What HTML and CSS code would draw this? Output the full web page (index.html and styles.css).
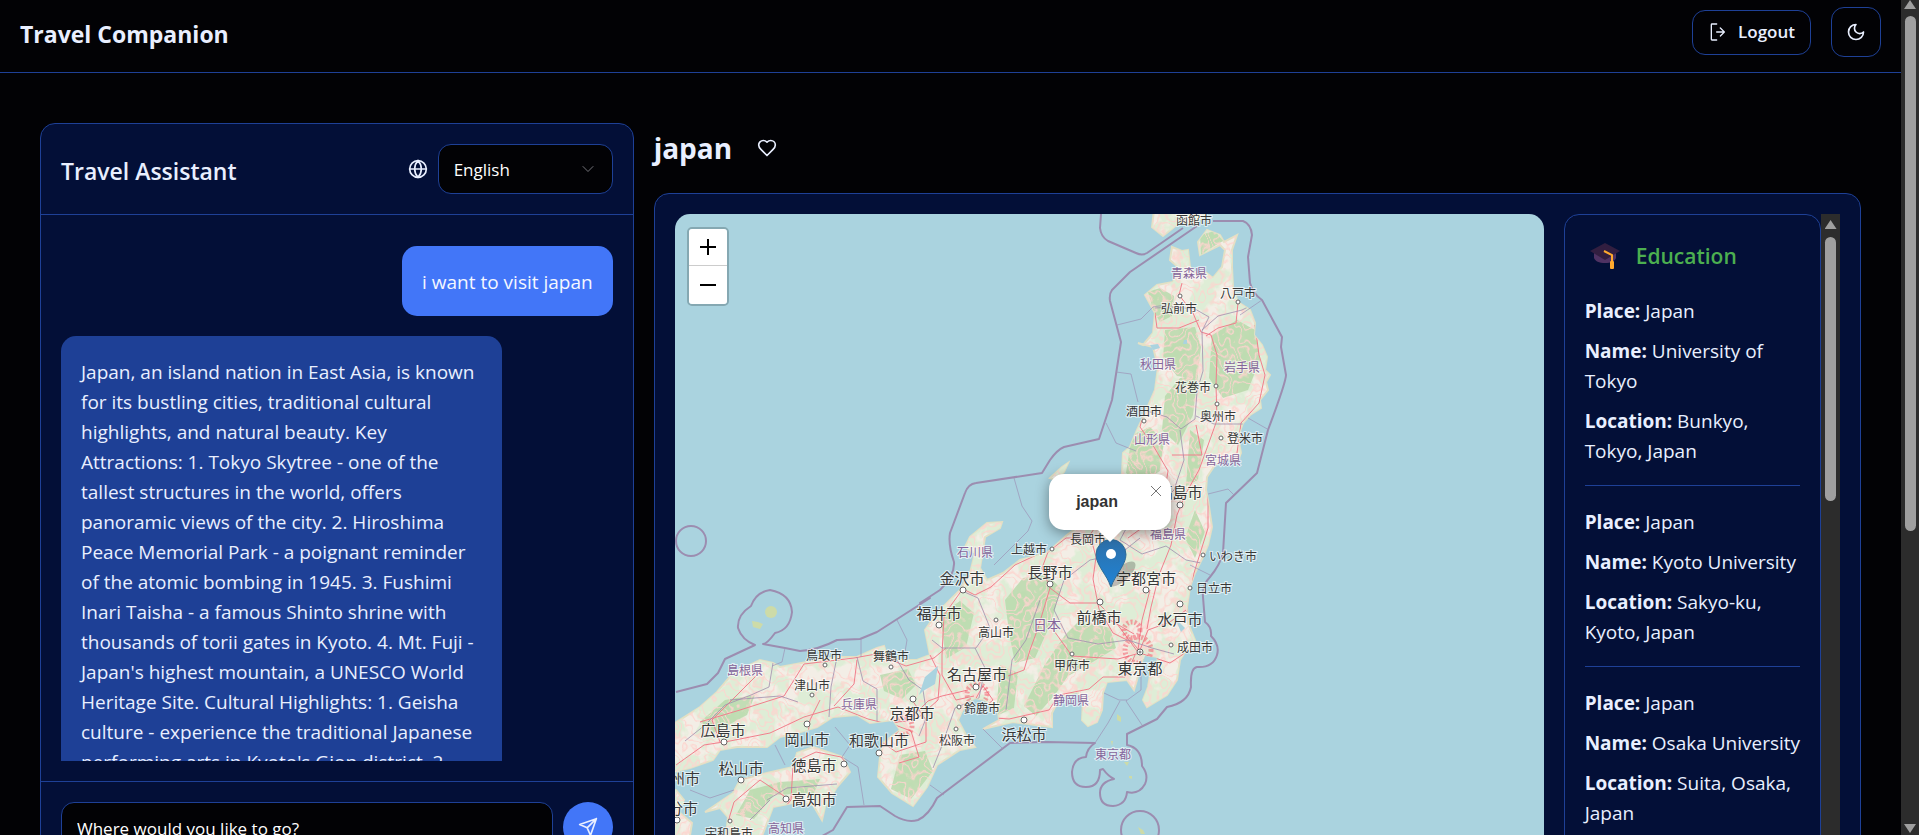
FILE: index.html
```html
<!DOCTYPE html>
<html lang="en">
<head>
<meta charset="utf-8">
<title>Travel Companion</title>
<link rel="stylesheet" href="styles.css">
</head>
<body>
<div class="window">
<div class="page">
  <header class="topbar">
    <h1 class="brand">Travel Companion</h1>
    <div class="topbar-actions">
      <button class="btn logout" type="button">
        <svg class="icon" viewBox="0 0 15 15"><path fill="currentColor" fill-rule="evenodd" d="M3 1a1 1 0 0 0-1 1v11a1 1 0 0 0 1 1h3.500a.5.5 0 0 0 0-1H3V2h3.500a.5.5 0 0 0 0-1zM12.600 7.850a.5.5 0 0 0 0-.7l-3-3a.5.5 0 1 0-.7.7L11.040 7H6.500a.5.5 0 0 0 0 1h4.540L8.900 10.150a.5.5 0 0 0 .7.7z"/></svg>
        Logout
      </button>
      <button class="btn theme" type="button" aria-label="Toggle theme">
        <svg class="icon line" viewBox="0 0 24 24"><path d="M12 3a6 6 0 0 0 9 9 9 9 0 1 1-9-9Z"/></svg>
      </button>
    </div>
  </header>

  <main class="layout">
    <section class="panel chat">
      <div class="chat-head">
        <h2 class="chat-title">Travel Assistant</h2>
        <div class="lang">
          <svg class="icon globe line" viewBox="0 0 24 24"><circle cx="12" cy="12" r="10"/><path d="M12 2a14.500 14.500 0 0 0 0 20 14.500 14.500 0 0 0 0-20M2 12h20"/></svg>
          <div class="select-wrap">
            <select class="select" aria-label="Language"><option>English</option></select>
            <svg class="chevron line" viewBox="0 0 24 24"><path d="m6 9 6 6 6-6"/></svg>
          </div>
        </div>
      </div>
      <div class="messages">
        <p class="bubble user">i want to visit japan</p>
        <p class="bubble bot">Japan, an island nation in East Asia, is known<br>for its bustling cities, traditional cultural<br>highlights, and natural beauty. Key<br>Attractions: 1. Tokyo Skytree - one of the<br>tallest structures in the world, offers<br>panoramic views of the city. 2. Hiroshima<br>Peace Memorial Park - a poignant reminder<br>of the atomic bombing in 1945. 3. Fushimi<br>Inari Taisha - a famous Shinto shrine with<br>thousands of torii gates in Kyoto. 4. Mt. Fuji -<br>Japan's highest mountain, a UNESCO World<br>Heritage Site. Cultural Highlights: 1. Geisha<br>culture - experience the traditional Japanese<br>performing arts in Kyoto's Gion district. 2.</p>
      </div>
      <form class="composer">
        <input class="input" type="text" aria-label="Message" placeholder="Where would you like to go?">
        <button class="send" type="button" aria-label="Send">
          <svg class="icon line" viewBox="0 0 24 24"><path d="m22 2-7 20-4-9-9-4ZM22 2 11 13"/></svg>
        </button>
      </form>
    </section>

    <section class="place">
      <div class="place-head">
        <h2 class="place-title">japan</h2>
        <button class="like" type="button" aria-label="Save place">
          <svg class="icon line" viewBox="0 0 24 24"><path d="M19 14c1.490-1.460 3-3.210 3-5.500A5.500 5.500 0 0 0 16.500 3c-1.760 0-3 .5-4.500 2-1.500-1.500-2.740-2-4.500-2A5.500 5.500 0 0 0 2 8.500c0 2.300 1.500 4.050 3 5.500l7 7Z"/></svg>
        </button>
      </div>
      <div class="panel explore">
        <div class="map">
          <svg class="tiles" viewBox="675 214 869 748" preserveAspectRatio="xMidYMin slice">
            <defs>
              <path id="land" d="M1172 247L1182 251 1188 250 1190 267 1197 275 1205 272 1213 278 1222 267 1225 250 1220 245 1200 255 1198 242 1207 230 1220 235 1224 242 1237 235 1232 250 1232 267 1233 287 1238 302 1250 310 1255 323 1254 335 1262 345 1267 357 1265 370 1270 375 1266 382 1268 390 1260 400 1261 408 1250 415 1243 423 1238 437 1241 453 1238 460 1225 459 1215 465 1207 477 1206 490 1208 500 1212 527 1208 545 1203 557 1195 573 1190 587 1187 607 1188 623 1195 640 1197 647 1185 652 1180 660 1177 680 1167 695 1147 707 1143 700 1148 687 1150 675 1158 665 1156 657 1145 656 1140 667 1137 680 1134 690 1127 680 1107 682 1103 693 1102 710 1097 722 1088 726 1082 720 1083 700 1077 692 1060 697 1052 713 1052 727 1013 722 983 729 999 720 998 712 985 700 975 698 965 705 958 720 966 735 975 747 960 750 937 765 927 787 913 806 892 793 878 777 880 757 883 743 900 730 893 720 870 723 857 715 833 717 817 727 797 733 780 737 767 747 737 747 720 750 713 760 690 768 660 775 660 728 675 723 700 707 717 692 733 673 760 660 773 663 780 667 807 662 837 657 857 657 877 648 884 646 887 655 897 660 917 660 930 655 925 630 937 613 960 590 970 573 975 553 965 547 970 537 987 523 1002 522 1000 528 985 537 983 550 980 568 987 580 1003 573 1020 560 1047 553 1067 535 1087 520 1113 500 1122 473 1123 453 1130 447 1137 430 1145 413 1155 390 1158 367 1153 347 1138 343 1143 345 1153 333 1155 313 1145 295 1157 285 1173 282 1178 267 1170 260ZM1154 210L1152 227 1163 236 1173 228 1180 222 1195 224 1210 210ZM797 753L813 747 843 757 850 772 837 787 825 807 822 820 813 805 793 803 773 807 767 823 753 860 723 860 728 817 720 808 705 812 733 793 740 780 767 773 793 767ZM660 785L676 790 684 800 679 812 692 823 686 860 660 860ZM1068 463L1064 472 1056 480 1050 478 1062 467Z"/>
              <clipPath id="shore"><use href="#land"/></clipPath>
              <filter id="forest" x="0" y="0" width="100%" height="100%">
                <feTurbulence type="fractalNoise" baseFrequency=".05 .042" numOctaves="4" seed="8"/>
                <feColorMatrix values="0 0 0 0 .73  0 0 0 0 .85  0 0 0 0 .67  8 0 0 0 -3.300"/>
              </filter>
              <filter id="lanes" x="0" y="0" width="100%" height="100%">
                <feTurbulence type="fractalNoise" baseFrequency=".04 .035" numOctaves="3" seed="31"/>
                <feColorMatrix values="0 0 0 0 .98  0 0 0 0 .66  0 0 0 0 .62  0 1 0 0 0"/>
                <feComponentTransfer><feFuncA type="table" tableValues="0 0 0 0 0 0 0 0 0 0 .9 0 0 0 .9 0 0 0 .9 0 0 0 0 0 0 0 0 0 0"/></feComponentTransfer>
              </filter>
              <linearGradient id="pin" x1="0" y1="0" x2="0" y2="1"><stop offset="0" stop-color="#2e6fa8"/><stop offset="1" stop-color="#1f84d6"/></linearGradient>
            </defs>
            <rect x="0" y="0" width="2600" height="2000" fill="#aad3df"/>
            <use href="#land" fill="#f3eee6" stroke="#e3e0c4" stroke-width="2"/>
            <g clip-path="url(#shore)">
              <rect x="660" y="210" width="640" height="650" filter="url(#forest)"/>
              <g fill="#b9d9ab" opacity=".85">
                <path d="M1200 235l15-4 8 10-17 10-5 5zM1148 292l12-4 14 8-2 20-12 6-7-12zM1165 330l30-3 6 20-4 32-20-3-14-18zM1212 335l25-15 18 10 5 30-12 30-25 8-14-20zM1132 435l18-8 14 14-4 30-20 12-14-10zM1005 600l18-22 24-4 14 15-10 34-16 35-20 5-6-30zM1065 635l15-15 30 8 6 20-30 18-18 10-14 20-18 20-12-10 20-40zM1000 665l18 8-4 35-18 8zM900 755l25-4 8 20-22 28-20-10zM880 675l28-6 8 16-14 14-18-8zM940 615l20-14 14 12-8 34-20 12zM700 722l25-22 30-5-8 20-34 18zM750 790l30-8 40-3-6 14-40 2-20 24-18-4z"/>
                <path d="M1180 378l18-3-5 40-15 30-16-15 3-34zM1190 430l14 10-6 40-12 6zM1195 510l10 22-10 26-10-20zM1122 510l20-16 14 20-20 14z"/>
              </g>
              <rect x="660" y="210" width="640" height="650" filter="url(#lanes)"/>
              <g class="red-roads">
                <path d="M1182 283l-3 12 14 18 8 19 10 3 6 20-1 30 1 35-10 28-8 22-14 25-8 20-6 30-12 30-8 32-4 22M1238 303l-2 20-18 5-12 8M1255 325l4 30 6 20-6 28-18 20-4 30M1155 313l2 15 22 0 20-8M1144 412l-4 15 14 20 14 24-4 26-14 25-22 16M1172 455l30 0-6-30M1208 478l0 50-14 45-7 40"/>
                <path d="M1113 500l-25 38-22 0-18 14-6 16 8 20-12 40-8 22-6 20-16 6M1090 535l6 22-3 22 6 30 14 24 20 10 8 10M965 590l10 5 16-8 24-22 30-14M962 590l-18 25-2 40 0 20 14 25 18-4M1050 588l20 15 28 0 14 14 28 38M1140 653l30 10 15-10M1140 653l-22 6-46-3-20-28M1135 655l-10 22-22 0-14 12-30 6-10 15-40 9-28-2M1140 650l8-20 22-8 16-12M1150 590l-8 30-4 30M1110 620l24 14"/>
                <path d="M676 765l28-20 26-4 40-8 34-16 34-10 30 12 16 4 24-2 20-20 14-5 26-6M700 722l40-12 44-14 20-32 50-6 22-4 30 12 28-8 12-10M720 742l-8-22 20-20 30-30M820 700l-10 20-3 20M857 660l-3 24-20 22M912 700l14 20 0 22-30 10-14-10M895 725l16 6 8 26-20 6M740 780l50-16 26-12 25 5 10 12M790 800l-30-20-26 22-6 20M845 760l22-30M793 765l-2 35-24 28M975 700l8-14 10 14-14 12M930 655l10 20-2 25-20 18"/>
              </g>
              <g class="cities"><circle cx="1138" cy="650" r="13"/><circle cx="903" cy="726" r="9"/><circle cx="977" cy="694" r="10"/><circle cx="1132" cy="630" r="8"/></g>
              <path class="pref" d="M1155 308l20-1 20 2 14 8-7 14 1 40-6 20-2 28-14 10-14-12-20-6M1202 330l16-14 24-6 16-8M1196 416l18 8 28 0 20 6M1180 430l4 30-10 30-20 20-20 4-14 26 22 14 24-8 20 14 20 4M1090 560l30-6 20-16M1090 560l-26 20-10 30 14 28 30 6 30-4 24 8 22 6M1040 600l-14 40-14 20-6 50M960 590l18 8 12 30-14 20-34 0-10-8M975 648l10 20-6 30-24 10-14 40-8 20M897 660l12 20 14 10 4 26-8 20M857 657l6 24 14 8 0 32M837 657l-6 30-2 30M773 663l-4 24-18 8-26 10-20 20-20 16M730 700l50-4 18 6M767 800l20-12 50-4M750 820l20-20"/>
            </g>
            <g fill="#aad3df"><path d="M938 666l-3 18-12 7-4 4 6-18zM1145 656l12 2-2 7-10 6-3-6zM1184 340l3 0 0 4-4 0zM1150 345l8-1 2 4-7 2zM1175 618l10 10-4 4z"/></g>
            <g fill="#cddba8"><circle cx="771" cy="612" r="6"/><path d="M752 621l6 1 5 2-3 5-7-2zM1117 714l4 3 0 5-4-2zM1124 762l5 0-2 4zM1129 776l3 0 0 3-3-1zM1138 827l5 3 2 4-4 0zM1111 741l2 0-1 5z"/></g>
            <g class="sea-lines">
              <path d="M1101 214L1100 228Q1101 237 1108 241L1136 253Q1142 256 1147 253L1183 228M1197 226L1130 272 1112 290Q1109 294 1110 301L1121 342 1112 400 1099 439 1064 447Q1057 450 1050 460L1042 473 976 483Q968 484 965 493L950 533Q948 545 954 562 955 575 940 590L920 603 930 598 877 632 860 639 837 640Q818 650 800 651L785 648 763 644Q767 644 775 633 790 630 792 612 791 594 770 590 756 592 751 606 737 615 738 628 742 640 755 645L725 659 718 673 707 684 676 692"/>
              <path d="M1213 221L1243 221Q1251 224 1252 235L1248 257 1250 283Q1253 294 1262 300L1282 337 1281 347 1286 375Q1286 382 1268 430L1257 473 1226 503 1223 553Q1220 565 1210 577 1202 585 1203 597L1205 622Q1212 627 1211 636 1220 645 1217 655 1213 668 1197 667 1190 668 1191 687 1188 703 1167 707L1157 719 1127 734 1127 745Q1142 748 1142 766 1149 775 1145 784 1139 795 1127 792 1126 805 1113 806 1100 806 1100 793 1100 782 1114 779 1108 776 1103 769L1100 770Q1100 787 1086 787 1072 787 1072 772 1073 758 1086 757 1087 748 1095 743L1047 742 1010 743 937 798Q929 815 918 820 907 823 895 816L880 806 847 807 833 830 815 840"/>
              <circle cx="1140" cy="830" r="19"/><circle cx="691" cy="541" r="15"/>
            </g>
            <path class="sea-thin" d="M1117 325l24-6 12-12 12-2M1116 372l15 2 7 28M1106 423l10 20 20 8M1248 418l21 12M1262 300l-22 15M1014 478l8 28 10 15-4 10-34 34M1208 494l20-5 6 6M1190 565l20 10M897 620l10 20-3 18M861 639l0 18M785 648l-3 14-10 4M1127 700l-8 0-15-7M1141 670l0 20-15 11 16 24M1120 701l-12 22-13 20M983 729l20 20M835 727l15 18-8 12 16 10 6 38M775 745l10 20M690 790l20 8 24-8M930 785l14 10"/>
            <g class="dots">
              <g><circle cx="1180" cy="296" r="2"/><circle cx="1238" cy="302" r="2"/><circle cx="1216" cy="386" r="2"/><circle cx="1217" cy="404" r="2"/><circle cx="1144" cy="421" r="2"/><circle cx="1221" cy="438" r="2"/><circle cx="1052" cy="549" r="2"/><circle cx="1203" cy="555" r="2"/><circle cx="1190" cy="588" r="2"/><circle cx="996" cy="620" r="2"/><circle cx="1171" cy="645" r="2"/><circle cx="1072" cy="654" r="2"/><circle cx="959" cy="707" r="2"/><circle cx="956" cy="729" r="2"/><circle cx="891" cy="667" r="2"/><circle cx="825" cy="665" r="2"/><circle cx="812" cy="695" r="2"/><circle cx="730" cy="821" r="2"/></g>
              <g><circle cx="1180" cy="505" r="3"/><circle cx="963" cy="590" r="3"/><circle cx="1050" cy="584" r="3"/><circle cx="1146" cy="590" r="3"/><circle cx="939" cy="625" r="3"/><circle cx="1100" cy="602" r="3"/><circle cx="1180" cy="604" r="3"/><circle cx="1140" cy="652" r="3"/><circle cx="1140" cy="652" r="1"/><circle cx="1024" cy="720" r="3"/><circle cx="976" cy="687" r="3"/><circle cx="913" cy="699" r="3"/><circle cx="879" cy="753" r="3"/><circle cx="724" cy="742" r="3"/><circle cx="807" cy="724" r="3"/><circle cx="741" cy="780" r="3"/><circle cx="844" cy="764" r="3"/><circle cx="786" cy="799" r="3"/><circle cx="677" cy="820" r="3"/></g>
            </g>
            <g class="names small">
              <text x="1194" y="225">函館市</text><text x="1238" y="298">八戸市</text><text x="1179" y="313">弘前市</text><text x="1193" y="392">花巻市</text><text x="1144" y="416">酒田市</text><text x="1218" y="421">奥州市</text><text x="1245" y="443">登米市</text><text x="1088" y="544">長岡市</text><text x="1029" y="554">上越市</text><text x="1233" y="561">いわき市</text><text x="1214" y="593">日立市</text><text x="996" y="637">高山市</text><text x="1195" y="652">成田市</text><text x="1072" y="670">甲府市</text><text x="982" y="713">鈴鹿市</text><text x="957" y="745">松阪市</text><text x="891" y="661">舞鶴市</text><text x="824" y="660">鳥取市</text><text x="812" y="690">津山市</text><text x="729" y="838">宇和島市</text>
            </g>
            <g class="names large">
              <text x="1180" y="498">福島市</text><text x="962" y="584">金沢市</text><text x="1050" y="578">長野市</text><text x="1146" y="584">宇都宮市</text><text x="939" y="619">福井市</text><text x="1099" y="623">前橋市</text><text x="1180" y="625">水戸市</text><text x="1140" y="674">東京都</text><text x="1024" y="740">浜松市</text><text x="977" y="680">名古屋市</text><text x="912" y="719">京都市</text><text x="879" y="746">和歌山市</text><text x="723" y="736">広島市</text><text x="807" y="745">岡山市</text><text x="741" y="774">松山市</text><text x="814" y="771">徳島市</text><text x="814" y="805">高知市</text><text x="685" y="784">州市</text><text x="683" y="814">分市</text>
            </g>
            <g class="names region">
              <text x="1189" y="278">青森県</text><text x="1158" y="369">秋田県</text><text x="1242" y="372">岩手県</text><text x="1152" y="444">山形県</text><text x="1223" y="465">宮城県</text><text x="1168" y="539">福島県</text><text x="975" y="557">石川県</text><text x="1071" y="705">静岡県</text><text x="1113" y="759">東京都</text><text x="859" y="709">兵庫県</text><text x="745" y="675">島根県</text><text x="786" y="833">高知県</text><text class="nation" x="1047" y="630">日本</text>
            </g>
            <ellipse cx="1122" cy="574" rx="17" ry="7" fill="#000" opacity=".22" transform="rotate(-42 1122 574)"/>
            <path d="M1111 587C1107 575 1096 565 1096 554.500A15 15 0 0 1 1126 554.500C1126 565 1115 575 1111 587Z" fill="url(#pin)" stroke="#2e6c97"/><circle cx="1111" cy="554" r="5" fill="#fff"/>
          </svg>
          <div class="zoom">
            <button type="button" aria-label="Zoom in"><svg viewBox="0 0 16 16"><path d="M0 8h16M8 0v16"/></svg></button>
            <button type="button" aria-label="Zoom out"><svg viewBox="0 0 16 16"><path d="M0 8h16"/></svg></button>
          </div>
          <div class="popup">
            <strong>japan</strong>
            <button class="popup-close" type="button" aria-label="Close popup"><svg viewBox="0 0 10 10"><path d="M0 0l10 10M10 0L0 10"/></svg></button>
          </div>
        </div>

        <div class="side">
          <article class="card">
            <h3 class="card-title">
              <svg class="cap" viewBox="0 0 30 26"><path fill="#4f3263" d="M4 9v6c1 3 5 5 11 5s10-2 11-5V9z"/><path fill="#321e40" d="M15 0l15 8-15 9L0 8z"/><path d="M14 8l8 4v8" fill="none" stroke="#ffa92e" stroke-width="2"/><rect x="20" y="18" width="4" height="8" rx="1" fill="#ffa92e"/></svg>
              Education
            </h3>
            <div class="entry"><p><b>Place:</b> Japan</p><p><b>Name:</b> University of<br>Tokyo</p><p><b>Location:</b> Bunkyo,<br>Tokyo, Japan</p></div>
            <div class="entry"><p><b>Place:</b> Japan</p><p><b>Name:</b> Kyoto University</p><p><b>Location:</b> Sakyo-ku,<br>Kyoto, Japan</p></div>
            <div class="entry"><p><b>Place:</b> Japan</p><p><b>Name:</b> Osaka University</p><p><b>Location:</b> Suita, Osaka,<br>Japan</p></div>
          </article>
          <div class="scroll inner-scroll"><i class="arrow up"></i><i class="thumb"></i></div>
        </div>
      </div>
    </section>
  </main>
</div>
<div class="scroll page-scroll"><i class="arrow up"></i><i class="thumb"></i><i class="arrow down"></i></div>
</div>
</body>
</html>
```
FILE: styles.css
```css
* { box-sizing: border-box; margin: 0; }

:root {
  --bg: #020205;
  --panel: #030f37;
  --line: #1e4096;
  --text: #e9efff;
  --accent: #4276f8;
}

body {
  background: var(--bg);
  color: var(--text);
  font: 19px/30px "Open Sans", "Noto Sans", sans-serif;
}

button, input, select { font: inherit; color: inherit; }
button { cursor: pointer; padding: 0; background: none; border: 0; }
svg { display: block; }

.window { display: flex; height: 100vh; overflow: hidden; }
.page { flex: 1; min-width: 0; overflow: hidden; }
.icon { width: 20px; height: 20px; flex: none; }
.line { fill: none; stroke: currentColor; stroke-width: 2; stroke-linecap: round; stroke-linejoin: round; }

.topbar {
  display: flex;
  align-items: center;
  justify-content: space-between;
  padding: 7px 20px 15px;
  border-bottom: 1px solid var(--line);
}
.brand { padding-top: 4px; font-size: 23px; font-weight: 700; }
.topbar-actions { display: flex; align-items: center; gap: 20px; }
.btn {
  display: flex;
  align-items: center;
  justify-content: center;
  border: 1px solid var(--line);
  border-radius: 13px;
}
.logout { height: 45px; padding: 0 15px; gap: 10px; font-size: 17px; font-weight: 600; }
.theme { width: 50px; height: 50px; }

.layout {
  display: grid;
  grid-template-columns: repeat(3, minmax(0, 1fr));
  gap: 20px;
  padding: 50px 40px;
}
.panel { background: var(--panel); border: 1px solid var(--line); border-radius: 15px; }

.chat { display: flex; flex-direction: column; }
.chat-head {
  display: flex;
  align-items: center;
  justify-content: space-between;
  padding: 20px;
  border-bottom: 1px solid var(--line);
}
.chat-title { padding-top: 4px; font-size: 23px; font-weight: 600; }
.lang { display: flex; align-items: center; gap: 10px; }
.select-wrap { position: relative; width: 175px; }
.select {
  width: 100%;
  height: 50px;
  padding: 2px 15px 0;
  font-size: 17px;
  color: #fff;
  background: var(--bg);
  border: 1px solid var(--line);
  border-radius: 13px;
  appearance: none;
}
.chevron { position: absolute; right: 15px; top: 15px; width: 20px; height: 20px; color: #8a8a92; stroke-width: 1; pointer-events: none; }

.messages {
  display: flex;
  flex-direction: column;
  gap: 20px;
  height: 546px;
  margin-bottom: 20px;
  padding: 31px 20px 0;
  overflow: hidden;
}
.bubble { flex: none; padding: 21px 20px 19px; border-radius: 15px; }
.user { align-self: flex-end; background: var(--accent); color: #f4f7ff; }
.bot { align-self: flex-start; width: 80%; background: #1e4096; white-space: nowrap; }

.composer { display: flex; gap: 10px; padding: 20px; border-top: 1px solid var(--line); }
.input {
  flex: 1;
  min-width: 0;
  height: 50px;
  padding: 2px 15px 0;
  font-size: 17px;
  background: var(--bg);
  border: 1px solid var(--line);
  border-radius: 13px;
}
.input::placeholder { color: #fff; opacity: 1; }
.send {
  display: grid;
  place-items: center;
  width: 50px;
  height: 50px;
  border-radius: 50%;
  background: var(--accent);
}

.place { grid-column: span 2; }
.place-head { display: flex; align-items: center; gap: 25px; height: 50px; margin-bottom: 20px; }
.place-title { font-size: 28px; font-weight: 700; }
.explore {
  display: grid;
  grid-template-columns: repeat(4, minmax(0, 1fr));
  gap: 20px;
  height: 790px;
  padding: 20px;
}

.map { grid-column: span 3; position: relative; overflow: hidden; border-radius: 15px; }
.tiles { width: 100%; height: 100%; }
.red-roads { fill: none; stroke: #f07f8c; stroke-width: 1; }
.cities { fill: none; stroke: #f2606d; stroke-width: 5; stroke-dasharray: 2 2; opacity: .55; }
.pref { fill: none; stroke: #a08fae; opacity: .8; }
.sea-lines { fill: none; stroke: #9c8db0; stroke-width: 2; stroke-linejoin: round; }
.sea-thin { fill: none; stroke: #9c93b6; opacity: .7; }
.dots { fill: #fff; stroke: #666; }
.names { font-family: "Noto Sans CJK JP", sans-serif; text-anchor: middle; paint-order: stroke; stroke: rgba(255, 255, 255, .65); stroke-width: 2px; fill: #383838; }
.small { font-size: 12px; }
.large { font-size: 15px; }
.region { font-size: 12px; fill: #85659a; }
.nation { font-size: 14px; }

.zoom {
  position: absolute;
  left: 12px;
  top: 13px;
  overflow: hidden;
  border: 2px solid #85a8b2;
  border-radius: 5px;
}
.zoom button { display: grid; place-items: center; width: 38px; height: 38px; background: #fff; }
.zoom button:first-child { height: 37px; border-bottom: 1px solid #ccc; }
.zoom svg { width: 16px; height: 16px; fill: none; stroke: #000; stroke-width: 2; }

.popup {
  position: absolute;
  left: 50%;
  top: 260px;
  width: 122px;
  height: 56px;
  margin-left: -60px;
  padding: 13px 27px;
  background: #fff;
  color: #333;
  border-radius: 15px;
  box-shadow: 0 3px 14px rgba(0, 0, 0, .4);
  font: 700 16px/30px "Liberation Sans", Arial, sans-serif;
}
.popup::after {
  content: "";
  position: absolute;
  left: 49px;
  top: 56px;
  border: 12px solid transparent;
  border-top-color: #fff;
}
.popup-close { position: absolute; right: 10px; top: 12px; }
.popup-close svg { width: 10px; height: 10px; overflow: visible; fill: none; stroke: #757575; }

.side { display: flex; min-height: 0; overflow: hidden; }
.card { flex: 1; padding: 20px; border: 1px solid var(--line); border-radius: 15px; white-space: nowrap; }
.card-title {
  display: flex;
  align-items: center;
  gap: 16px;
  height: 41px;
  margin-bottom: 20px;
  padding-left: 5px;
  color: #4caf50;
  font-size: 21px;
  font-weight: 600;
}
.cap { width: 30px; height: 26px; }
.entry { display: grid; gap: 10px; padding-bottom: 19px; }
.entry + .entry { border-top: 1px solid var(--line); padding-top: 21px; }

.scroll { display: flex; flex-direction: column; align-items: center; flex: none; background: #2c2c2c; }
.page-scroll { width: 18px; padding-bottom: 2px; }
.page-scroll .thumb { height: 515px; margin: 7px 0 auto; }
.inner-scroll { width: 19px; padding-top: 6px; }
.inner-scroll .thumb { height: 264px; margin-top: 8px; }
.thumb { width: 11px; border-radius: 6px; background: #9f9f9f; }
.arrow { width: 12px; height: 9px; background: #9f9f9f; }
.up { clip-path: polygon(50% 0, 100% 100%, 0 100%); }
.down { clip-path: polygon(0 0, 100% 0, 50% 100%); }
```
